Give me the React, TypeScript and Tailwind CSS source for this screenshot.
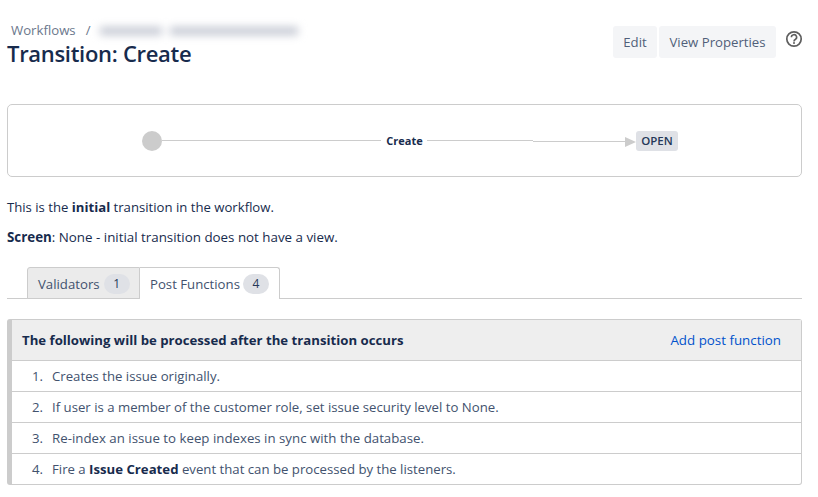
export default function App() {
  const font = { fontFamily: '"Open Sans", "Noto Sans", sans-serif' };
  const rows: React.ReactNode[] = [
    "Creates the issue originally.",
    "If user is a member of the customer role, set issue security level to None.",
    <span className="text-[13.27px]">Re-index an issue to keep indexes in sync with the database.</span>,
    <>Fire a <b className="font-bold text-[#172b4d]">Issue Created</b> event that can be processed by the listeners.</>,
  ];
  return (
    <div style={font} className="w-[818px] h-[497px] overflow-hidden bg-white text-[13.2px] leading-[20px] text-[#172b4d]">
      <div className="pl-[7px] w-[802px]">
        <div className="flex justify-between items-start h-[104px]">
          <div className="pt-[20px]">
            <div className="flex items-center h-[20px] pl-[4px] text-[13.2px] text-[#6b778c]">
              <span>Workflows</span>
              <span className="ml-[10px]">/</span>
              <span className="ml-[10px] flex gap-[8px] blur-[4px] pt-[2px]">
                <span className="block w-[62px] h-[8px] bg-[#c3c7d2]"></span>
                <span className="block w-[128px] h-[8px] bg-[#c3c7d2]"></span>
              </span>
            </div>
            <h1 className="text-[22px] leading-[28px] font-semibold text-[#172b4d] -mt-[1px] tracking-[-0.3px]">Transition: Create</h1>
          </div>
          <div className="flex items-start gap-[2px] pt-[26px] -mr-[1px]">
            <button className="h-[32px] w-[44px] rounded-[3px] bg-[#f4f5f7] text-[#505f79] text-[13.2px]">Edit</button>
            <button className="h-[32px] w-[117px] rounded-[3px] bg-[#f4f5f7] text-[#505f79] text-[13.2px]">View Properties</button>
            <svg className="ml-[7px] mt-[4px]" width="18" height="18" viewBox="0 0 18 18" fill="none">
              <circle cx="9" cy="9" r="7.2" stroke="#5e5e5e" strokeWidth="1.7" />
              <path d="M6.4 7.3a2.6 2.6 0 1 1 3.9 2.2c-.9.5-1.3 1-1.3 1.9" stroke="#5e5e5e" strokeWidth="1.6" />
              <circle cx="9" cy="13.1" r="1" fill="#5e5e5e" />
            </svg>
          </div>
        </div>

        <div className="h-[73px] w-[795px] border border-[#cccccc] rounded-[5px] flex items-center pl-[134px] text-[12px]">
          <span className="w-[20px] h-[20px] rounded-full bg-[#cccccc] shrink-0"></span>
          <span className="w-[219px] h-px bg-[#cccccc]"></span>
          <span className="ml-[5px] w-[37px] text-center font-bold text-[11px] whitespace-nowrap">Create</span>
          <span className="ml-[4px] w-[106px] h-px bg-[#cccccc]"></span>
          <span className="w-[92px] h-px bg-[#cccccc] mt-[2px]"></span>
          <svg className="mt-[2px]" width="11" height="10" viewBox="0 0 11 10"><path d="M0 0 L11 5 L0 10Z" fill="#cccccc" /></svg>
          <span className="w-[42px] h-[20px] rounded-[3px] bg-[#dfe1e6] text-center text-[11.5px] font-semibold leading-[20px] text-[#253858]">OPEN</span>
        </div>

        <p className="mt-[20px] text-[13.15px]">This is the <b className="font-bold">initial</b> transition in the workflow.</p>
        <p className="mt-[10px] text-[13.35px]"><b className="font-bold">Screen</b>: None - initial transition does not have a view.</p>

        <div className="mt-[20px] h-[32px] w-[795px] border-b border-[#cccccc] flex pl-[20px]">
          <div className="h-[32px] w-[113px] border border-[#cccccc] bg-[#ebebeb] rounded-tl-[3px] flex items-center pl-[10px] pt-[1px] text-[#42526e]">
            Validators
            <span className="ml-[4px] w-[26px] h-[20px] rounded-full bg-[#dfe1e6] text-center text-[12px] text-[#253858]">1</span>
          </div>
          <div className="h-[32px] w-[140px] border border-l-0 border-b-0 border-[#cccccc] bg-white rounded-tr-[3px] flex items-center pl-[10px] pt-[1px] text-[#42526e]">
            Post Functions
            <span className="ml-[3px] w-[26px] h-[20px] rounded-full bg-[#dfe1e6] text-center text-[12px] text-[#253858]">4</span>
          </div>
        </div>

        <div className="mt-[20px] w-[795px] border border-l-[5px] border-[#cccccc] rounded-[3px]">
          <div className="h-[41px] bg-[#eeeeee] border-b border-[#cccccc] flex items-center justify-between pl-[10px] pr-[20px]">
            <b className="font-bold">The following will be processed after the transition occurs</b>
            <a className="text-[#0052cc] text-[13.35px]">Add post function</a>
          </div>
          {rows.map((row, i) => (
            <div key={i} className={`flex items-center text-[#42526e] ${i < 3 ? "h-[31px] border-b border-[#cccccc]" : "h-[30px]"}`}>
              <span className="w-[40px] pr-[9px] text-right shrink-0">{i + 1}.</span>
              <span>{row}</span>
            </div>
          ))}
        </div>
      </div>
    </div>
  );
}
